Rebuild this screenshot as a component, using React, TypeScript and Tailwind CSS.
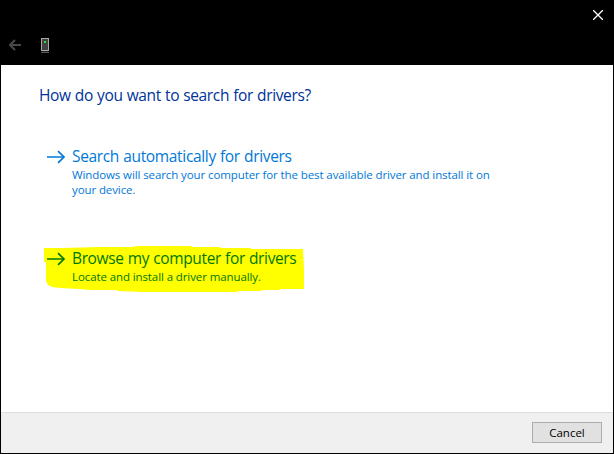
function ArrowRight() {
  return (
    <svg className="mt-[5px] h-4 w-[25px] shrink-0" viewBox="0 0 25 16" fill="none" stroke="currentColor">
      <path d="M0 8h17" strokeWidth="1.5" />
      <path d="M11 2.2L17 8l-6 5.8" strokeWidth="1.7" />
    </svg>
  );
}

export default function App() {
  return (
    <div className="flex h-[454px] w-[614px] flex-col bg-black px-px pb-px font-['Open_Sans','Noto_Sans',sans-serif]">
      <header className="flex h-[65px] shrink-0 flex-col">
        <div className="flex h-[30px] items-center justify-end pr-[10px]">
          <svg className="h-[10px] w-[10px]" viewBox="0 0 10 10" stroke="white" strokeWidth="1.3">
            <path d="M0 0l10 10M10 0L0 10" />
          </svg>
        </div>
        <div className="flex h-[35px] items-start pt-2 pl-2">
          <svg className="mt-px h-3 w-3" viewBox="0 0 12 12" fill="none" stroke="#484848" strokeWidth="2">
            <path d="M12 6H1M6 1L1 6l5 5" />
          </svg>
          <svg className="ml-5 h-[15px] w-2" viewBox="0 0 8 15">
            <rect x=".5" y=".5" width="7" height="12" fill="#424242" stroke="#a8a8a8" />
            <path d="M3 3h2v2H3z" fill="#28e428" />
            <path d="M1 13h6v1H1z" fill="#222" />
            <path d="M0 14h8v1H0z" fill="#555" />
          </svg>
        </div>
      </header>

      <main className="flex flex-1 flex-col bg-white pt-[18px]">
        <h1 className="ml-[38px] text-[15.5px] leading-6 tracking-[-0.37px] [word-spacing:0.5px] whitespace-nowrap text-[#003399]">
          How do you want to search for drivers?
        </h1>
        <button className="mt-[37px] ml-[46px] flex items-start text-left text-[#0078d7]">
          <ArrowRight />
          <span className="flex flex-col">
            <span className="text-[15.5px] leading-6 tracking-[-0.34px] [word-spacing:0.5px] whitespace-nowrap">
              Search automatically for drivers
            </span>
            <span className="mt-[-1px] text-[11.5px] leading-[15px] tracking-[-0.1px] whitespace-nowrap">
              Windows will search your computer for the best available driver and install it on
              <br />
              your device.
            </span>
          </span>
        </button>
        <button className="relative mt-[49px] ml-[46px] flex items-start text-left text-[#007800]">
          <svg className="absolute top-0 left-[-4px] h-[47px] w-[262px]" viewBox="43 246 262 47">
            <path
              d="M44 248h19l36-1h35l1-1h56l1 1h28l1 1h30v1h52l1 20v20h-24v1h-18v1h-24v1H142l-24-1-2-1H89l-10-1-19-1-8-1-4-2-2-4v-19h-2z"
              fill="#ffff00"
            />
          </svg>
          <span className="relative flex items-start">
            <ArrowRight />
            <span className="flex flex-col">
              <span className="text-[15.5px] leading-6 tracking-[-0.37px] [word-spacing:0.5px] whitespace-nowrap">
                Browse my computer for drivers
              </span>
              <span className="mt-[-1px] text-[11.5px] leading-[15px] tracking-[-0.1px] whitespace-nowrap">
                Locate and install a driver manually.
              </span>
            </span>
          </span>
        </button>
      </main>

      <footer className="flex h-[41px] shrink-0 items-start justify-end border-t border-[#dfdfdf] bg-[#f0f0f0] pt-[9px] pr-[11px]">
        <button className="h-[21px] w-[70px] border border-[#adadad] bg-[#e1e1e1] text-[11.5px] leading-[19px] text-black">
          Cancel
        </button>
      </footer>
    </div>
  );
}
